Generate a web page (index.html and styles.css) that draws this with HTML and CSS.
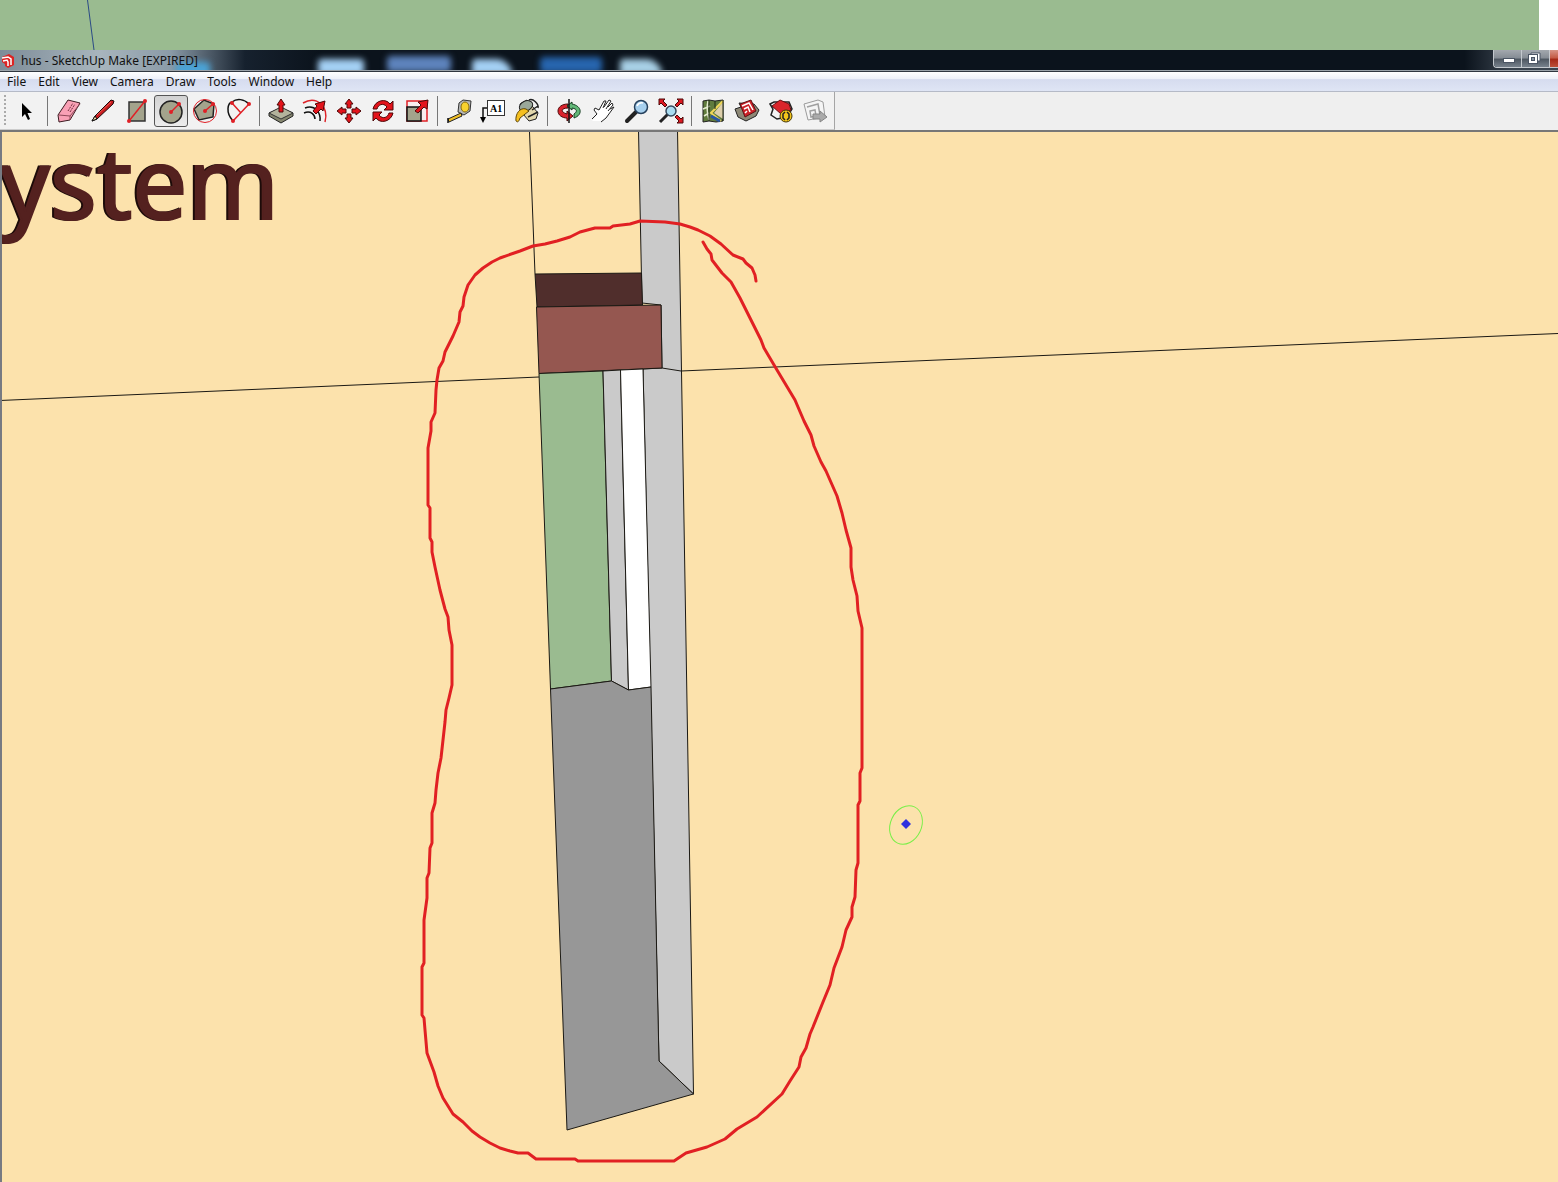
FILE: index.html
```html
<!DOCTYPE html>
<html lang="en">
<head>
<meta charset="utf-8">
<title>hus - SketchUp Make [EXPIRED]</title>
<link rel="stylesheet" href="styles.css">
</head>
<body>
<div class="backdrop">
  <svg class="backdrop-line" viewBox="0 0 100 50" aria-hidden="true"><path d="M87.500 0L94 50" stroke="#2b4a86" fill="none"/></svg>
</div>
<div class="window">
  <header class="titlebar">
    <svg class="app-icon" viewBox="0 0 16 16" aria-hidden="true"><path d="M2 4L9 1L14 4V12L8 15L5 13V11L2 9Z" fill="#dc2424"/><path d="M2 5L8 4L11 6V12M3 8L7 7L8 9V13" stroke="#fff" stroke-width="1.500" fill="none"/></svg>
    <h1 class="title">hus - SketchUp Make [EXPIRED]</h1>
    <div class="glow" aria-hidden="true"><i class="g0"></i><i class="g1"></i><i class="g2"></i><i class="g3"></i><i class="g4"></i><i class="g5"></i></div>
    <div class="controls">
      <button class="control" aria-label="Minimize"><svg viewBox="0 0 28 18"><rect x="9.500" y="8.500" width="11" height="4" fill="#fff" stroke="#4b5564"/></svg></button>
      <button class="control" aria-label="Restore"><svg viewBox="0 0 28 18"><path d="M9 3H18V11H9Z" fill="#fff" stroke="#4b5564"/><rect x="6.500" y="4.500" width="9" height="9" fill="#fff" stroke="#4b5564"/><rect x="9.500" y="7.500" width="3" height="3" fill="#8b95a3" stroke="#4b5564"/></svg></button>
      <button class="control close" aria-label="Close"></button>
    </div>
  </header>
  <nav class="menubar" aria-label="Main menu">
    <button class="menu">File</button><button class="menu">Edit</button><button class="menu">View</button><button class="menu">Camera</button><button class="menu">Draw</button><button class="menu">Tools</button><button class="menu">Window</button><button class="menu">Help</button>
  </nav>
  <div class="toolrow">
  <div class="toolbar" role="toolbar" aria-label="Getting started">
    <span class="grip"></span>
    <button class="tool" aria-label="Select"><svg viewBox="0 0 24 24"><path d="M7 4V18L10 15L13 21L15 20L12.500 14H17Z"/></svg></button>
    <span class="sep"></span>
    <button class="tool" aria-label="Eraser"><svg viewBox="0 0 24 24"><path d="M1 16L11 1L23 4L13 21L2 23Z" fill="#f9a0b5" stroke="#3c1b22"/><path d="M2 16L13 17L23 5M13 17V21" fill="none" stroke="#8e4859"/><path d="M11 12L16 4M13 13L18 5" stroke="#72303f" stroke-dasharray="2 1"/></svg></button>
    <button class="tool" aria-label="Line"><svg viewBox="0 0 24 24"><path d="M1 22L4 17L20 1L23 2L22 5L6 20Z" fill="#c81c20" stroke="#1c0b0b"/><path d="M1 22L4 17L6 20Z" fill="#ecd3a2" stroke="#111"/><path d="M6 16L20 3" stroke="#f15a50"/></svg></button>
    <button class="tool" aria-label="Rectangle"><svg viewBox="0 0 24 24"><path d="M4 3H20V22H4Z" fill="#a3a38c" stroke="#333" stroke-width="1.500"/><path d="M4 22L20 2" stroke="#e02026" stroke-width="1.500"/><circle cx="4" cy="22" r="2" fill="#e02026"/><circle cx="20" cy="2" r="2" fill="#e02026"/></svg></button>
    <button class="tool active" aria-label="Circle" aria-pressed="true"><svg viewBox="0 0 24 24"><circle cx="12" cy="13" r="11" fill="#a3a38c" stroke="#222" stroke-width="1.500"/><path d="M12 13L20 5" stroke="#e02026" stroke-width="1.500"/><circle cx="12" cy="13" r="2" fill="#e02026"/><circle cx="20" cy="5" r="2" fill="#e02026"/></svg></button>
    <button class="tool" aria-label="Polygon"><svg viewBox="0 0 24 24"><path d="M1 10L11 1L21 5L20 18L6 21Z" fill="#a3a38c" stroke="#222" stroke-width="1.500"/><circle cx="12" cy="12" r="11.500" fill="none" stroke="#e02026"/><path d="M12 12L20 5" stroke="#e02026" stroke-width="1.500"/><circle cx="12" cy="12" r="2" fill="#e02026"/><circle cx="20" cy="5" r="2" fill="#e02026"/></svg></button>
    <button class="tool" aria-label="Arc"><svg viewBox="0 0 24 24"><path d="M6 22C-2 13 1 4 5 3C10-1 17 0 22 5" fill="none" stroke="#111" stroke-width="1.500"/><path d="M6 22L22 5M5 4L14 14" stroke="#e02026" stroke-width="1.500"/><circle cx="6" cy="22" r="2" fill="#e02026"/><circle cx="22" cy="5" r="2" fill="#e02026"/><circle cx="5" cy="4" r="2" fill="#e02026"/></svg></button>
    <span class="sep"></span>
    <button class="tool" aria-label="Push/Pull"><svg viewBox="0 0 24 24"><path d="M0 14L12 9L24 14V17L12 24L0 17Z" fill="#85866f" stroke="#222"/><path d="M0 14L12 8L24 14L12 20Z" fill="#b3b39c" stroke="#333"/><path d="M12 0L16 6H14V13H10V6H8Z" fill="#e3131b" stroke="#4d0808"/></svg></button>
    <button class="tool" aria-label="Offset"><svg viewBox="0 0 24 24"><path d="M0 4C14-4 26 8 22 23" fill="none" stroke="#dd2228" stroke-width="1.500"/><path d="M2 9C12 5 18 14 17 22M1 14C8 11 12 16 12 20" fill="none" stroke="#111" stroke-width="1.500"/><path d="M10 12L14 7L12 5L22 2L20 12L18 10L13 15Z" fill="#e3131b" stroke="#4d0808"/></svg></button>
    <button class="tool" aria-label="Move"><svg viewBox="0 0 24 24"><g fill="#e3131b" stroke="#4d0808"><path id="arm" d="M12 0L16 5H14V9H10V5H8Z"/><use href="#arm" transform="rotate(90 12 12)"/><use href="#arm" transform="rotate(180 12 12)"/><use href="#arm" transform="rotate(270 12 12)"/></g></svg></button>
    <button class="tool" aria-label="Rotate"><svg viewBox="0 0 24 24"><g fill="#e3131b" stroke="#4d0808"><path id="turn" d="M2 10C4 1 15-1 19 5L22 2V11H13L16 8C12 3 7 6 6 10Z"/><use href="#turn" transform="rotate(180 12 12)"/></g></svg></button>
    <button class="tool" aria-label="Scale"><svg viewBox="0 0 24 24"><rect x="2" y="2" width="20" height="20" fill="#f8eeee" stroke="#e02026" stroke-width="1.500"/><path d="M2 8H16V22H2Z" fill="#a3a38c" stroke="#111" stroke-width="1.500"/><path d="M10 12L16 6L13 3L23 1L22 10L19 8L13 14Z" fill="#e3131b" stroke="#4d0808"/></svg></button>
    <span class="sep"></span>
    <button class="tool" aria-label="Tape Measure"><svg viewBox="0 0 24 24"><path d="M12 4L16 1L24 2L23 12L17 16L11 13Z" fill="#b7b9b8" stroke="#333"/><ellipse cx="18" cy="8" rx="4" ry="5" fill="#f8d22e" stroke="#866a0d"/><path d="M14 14L1 20L2 23L15 17Z" fill="#f0bf26" stroke="#222"/><path d="M1 19V24" stroke="#111" stroke-width="1.500"/></svg></button>
    <button class="tool" aria-label="Text"><svg viewBox="0 0 24 24"><rect x="6.500" y="1.500" width="17" height="15" fill="#fff" stroke="#333"/><path d="M6 9H2V20" fill="none" stroke="#111" stroke-width="1.500"/><path d="M-1 18H5L2 24Z"/><text x="9" y="13" class="glyph">A1</text></svg></button>
    <button class="tool" aria-label="Paint Bucket"><svg viewBox="0 0 24 24"><path d="M5 5L12 1L23 14L21 20L14 22L8 15Z" fill="#e3d8ac" stroke="#222"/><ellipse cx="11" cy="7" rx="7" ry="5" transform="rotate(-25 11 7)" fill="#9aa89a" stroke="#222"/><path d="M11 10C5 8 0 15 1 22C3 24 4 22 5 19L14 12Z" fill="#f5c020" stroke="#5e4608"/><path d="M14 1C18-1 24 5 23 9M17 11L23 7M13 18L23 13" fill="none" stroke="#222" stroke-width="1.500"/></svg></button>
    <span class="sep"></span>
    <button class="tool" aria-label="Orbit"><svg viewBox="0 0 24 24"><path d="M11 5C5 5 1 8 1 12C1 16 5 19 10 19V22L16 17L10 12V15C3 13 4 9 11 9Z" fill="#d9232d" stroke="#4d0808"/><path d="M15 3L10 7L15 11V9C21 10 20 13 17 15V19C26 16 25 7 15 5Z" fill="#62b878" stroke="#123d20"/><path d="M12 0V24" stroke="#111" stroke-width="1.500"/></svg></button>
    <button class="tool" aria-label="Pan"><svg viewBox="0 0 24 24"><path d="M1 22L6 16L3 11L4 9L8 11L13 2L15 2L13 8L18 1L20 2L16 9L21 4L22 6L18 11L22 8V10L15 19L9 22Z" fill="#fff"/><path d="M1 20L6 15L3 11L4 9L8 11L13 2L15 2L12 9M13 8L18 1L20 2L15 10M17 8L21 4L22 6L17 12M19 10L23 8L15 19L10 23" fill="none" stroke="#222"/></svg></button>
    <button class="tool" aria-label="Zoom"><svg viewBox="0 0 24 24"><path d="M2 22L11 13" stroke="#222" stroke-width="4" stroke-linecap="round"/><circle cx="16" cy="8" r="6.500" fill="#a7d0ee" stroke="#26415d" stroke-width="1.500"/><path d="M12 7Q14 3 18 4" fill="none" stroke="#fff" stroke-width="1.500"/></svg></button>
    <button class="tool" aria-label="Zoom Extents"><svg viewBox="0 0 24 24"><path d="M1 23L9 15" stroke="#222" stroke-width="3"/><circle cx="12" cy="12" r="5" fill="#a9dcf1" stroke="#33485c" stroke-width="1.500"/><g fill="#dc1a22" stroke="#4d0808"><path id="corner" d="M0 0H6L4 2L8 6L6 8L2 4L0 6Z"/><use href="#corner" transform="rotate(90 12 12)"/><use href="#corner" transform="rotate(180 12 12)"/></g></svg></button>
    <span class="sep"></span>
    <button class="tool" aria-label="Add Location"><svg viewBox="0 0 24 24"><path d="M2 2L8 1L14 2L22 1V22L15 23L8 22L2 23Z" fill="#607b3d" stroke="#222"/><path d="M13 14L22 3V20Z" fill="#ddcfac"/><path d="M22 2L10 14L20 22" fill="none" stroke="#f1d75a" stroke-width="2"/><path d="M10 17L19 22" stroke="#2855a2" stroke-width="3"/><path d="M7 2Q5 10 8 21M2 10L9 7M3 17L8 14" fill="none" stroke="#e4ebcf" stroke-width="1.500"/><path d="M8 1V22M14 2V10M22 1V22" stroke="#1c2914"/></svg></button>
    <button class="tool" aria-label="Get Models"><svg viewBox="0 0 24 24"><path d="M0 10L6 8L4 4L19 5L24 11L21 17L11 22L3 18Z" fill="#8d8876" stroke="#222"/><path d="M5 5L16 1L21 12L10 18Z" fill="#cc2026" stroke="#5d1115"/><path d="M7 7L14 4L18 11M9 10L13 8L15 13M10 14L12 12" fill="none" stroke="#fff" stroke-width="1.500"/></svg></button>
    <button class="tool" aria-label="Extension Warehouse"><svg viewBox="0 0 24 24"><path d="M1 5L5 3L20 3L23 10L18 18L8 20L2 16L4 10Z" fill="#f4f4f4" stroke="#222" stroke-width="1.500"/><path d="M3 7L11 1L20 5L22 11L12 15Z" fill="#d9252b" stroke="#6a1013"/><circle cx="17" cy="17" r="6" fill="#f3c51b" stroke="#443708"/><path d="M16 13L14 15V19L16 21M18 13L20 15V19L18 21" fill="none" stroke="#222" stroke-width="1.500"/></svg></button>
    <button class="tool" aria-label="Send to LayOut" disabled><svg viewBox="0 0 24 24"><path d="M1 5L15 1L20 3L22 18L5 21Z" fill="#f5f5f5" stroke="#9b9b9b"/><path d="M4 8L15 5L17 16M7 12L12 11L13 17L8 18Z" fill="none" stroke="#a0a0a0" stroke-width="1.500"/><path d="M10 15H17V12L24 18L17 23V20H10Z" fill="#aaa" stroke="#858585"/></svg></button>
  </div>
  </div>
  <main class="viewport">
    <svg class="scene" viewBox="2 132 1556 1050" role="img" aria-label="Model view">
      <text x="0" y="219" class="lettering">ystem</text>
      <g stroke="#1b1914" fill="none">
        <path d="M0 400.500L539 377M681 371L1558 333.500M529.500 132L535 274"/>
        <path d="M638.500 130L642 303L661 305L662 368L643 369L659 1061L693.500 1094L677.500 130Z" fill="#cacaca"/>
        <path d="M662 368L681 371"/>
        <path d="M535 274L641.500 273L642.500 305L537 307Z" fill="#502e2c"/>
        <path d="M536.500 307L661 305L662 368L539 373.500Z" fill="#955750"/>
        <path d="M539 373.500L603 371L611.500 681L550.500 689Z" fill="#9abb90"/>
        <path d="M603 371L620.500 370L628.500 690L611.500 681Z" fill="#cacaca"/>
        <path d="M620.500 370L643 369L651 687L628.500 690Z" fill="#fff"/>
        <path d="M550.500 689L611.500 681L628.500 690L651 687L659 1061L693.500 1094L567 1130Z" fill="#979797"/>
      </g>
      <path class="marker" d="M756 281L755 275L752 268L746 263L743 259L733 255L721 244L710 236L698 230L690 227L680 224L665 222L640 221L630 224L613 226L610 228L595 228L580 232L570 237L557 241L545 244L533 246L520 251L500 258L492 262L483 268L475 275L468 285L464 297L463 306L460 312L459 322L453 336L445 352L443 361L439 368L437 380L436 390L435 413L431 422L431 431L428 448L428 505L430 508L430 538L432 542L432 552L435 567L440 590L445 609L448 617L449 630L452 645V685L449 698L446 710L445 722L443 740L441 758L438 773L436 790L435 803L432 813V843L430 848L429 873L427 878L427 898L424 920V963L422 967V1015L424 1018L425 1030L427 1053L434 1072L438 1086L443 1098L453 1114L463 1122L472 1131L480 1137L490 1143L500 1148L510 1151L518 1153L528 1153L536 1159L575 1159L578 1161H674L686 1153L707 1147L725 1139L737 1129L757 1117L782 1094L790 1081L799 1067L801 1057L806 1048L810 1034L813 1027L823 1002L830 985L834 968L842 947L846 930L852 917L852 907L855 897L856 870L858 863V805L860 801L860 773L862 768V628L858 611L857 596L853 580L851 567L851 548L846 530L842 513L837 496L826 471L821 462L814 446L811 435L804 421L795 400L777 370L764 348L761 340L752 322L740 298L731 282L722 273L712 260L711 254L707 249L703 242"/>
      <ellipse cx="906" cy="825" rx="15.500" ry="20" transform="rotate(25 906 825)" fill="none" stroke="#79ef48"/>
      <path d="M906 819L911 824L906 829L901 824Z" fill="#2f31df"/>
    </svg>
  </main>
</div>
</body>
</html>
```
FILE: styles.css
```css
* { box-sizing: border-box; }
body { margin: 0; background: #fff; color: #111; font-family: "Noto Sans", sans-serif; font-size: 12px; }
button { font: inherit; color: inherit; padding: 0; border: 0; background: none; }
svg { display: block; }
.backdrop { height: 50px; margin-right: 19px; background: #9abb90; }
.backdrop-line { width: 100px; height: 50px; }
.window { overflow: hidden; }
.titlebar { position: relative; display: flex; align-items: center; height: 22px; background: linear-gradient(90deg, #7d8c98 0, #a8b5bd 100px, #8b9ba8 170px, #16212e 245px, #0b131c 320px, #0b131c 94%, #3a444f 97%); border-bottom: 1px solid #303740; box-shadow: inset 0 -1px #9ba3aa; overflow: hidden; }
.app-icon { position: relative; z-index: 1; width: 16px; height: 16px; }
.title { position: relative; z-index: 1; margin: 0 0 0 5px; font-size: 12px; line-height: 20px; font-weight: 400; }
.glow { position: absolute; inset: 0 0 1px; overflow: hidden; }
.glow i { position: absolute; top: 9px; height: 16px; border-radius: 4px; filter: blur(3px); background: #a4d0f4; }
.glow .g0 { left: 176px; width: 34px; top: 12px; background: #4aa3d6; }
.glow .g1 { left: 318px; width: 46px; }
.glow .g2 { left: 387px; width: 64px; top: 6px; background: #5d83bc; }
.glow .g3 { left: 472px; width: 40px; border-radius: 4px 16px 0 0; }
.glow .g4 { left: 540px; width: 62px; top: 7px; background: #2765ae; }
.glow .g5 { left: 620px; width: 42px; background: #a8d0e6; border-radius: 4px 18px 0 0; }
.controls { position: relative; display: flex; align-self: flex-start; margin-left: auto; height: 18px; border: 1px solid #c4c9ce; border-width: 0 0 1px 1px; border-radius: 0 0 0 4px; overflow: hidden; }
.control { width: 28px; height: 18px; background: linear-gradient(#a3a8ae 0, #858c94 45%, #4d5660 50%, #7c8792); border-right: 1px solid #c4c9ce; }
.control svg { width: 28px; height: 18px; }
.close { width: 8px; border-right: 0; background: linear-gradient(#d79386 0, #c45843 45%, #a42716 50%, #c0543c); }
.menubar { display: flex; gap: 12px; height: 20px; padding-left: 7px; background: linear-gradient(#fff 0, #eef1f9 35%, #d6dcef 40%, #dfe5f5); border-bottom: 1px solid #b5bac7; }
.menu { line-height: 19px; }
.toolrow { display: flex; height: 40px; background: #efefef; border-bottom: 2px solid #777; }
.toolbar { display: flex; align-items: center; padding: 0 2px 0 4px; background: #f2f2f2; border-right: 1px solid #a5a5a5; border-bottom: 1px solid #ccc; }
.grip { width: 2px; height: 32px; margin-right: 4px; background: repeating-linear-gradient(#aaa 0 2px, transparent 2px 4px); }
.tool { display: grid; place-items: center; width: 34px; height: 32px; }
.tool svg { width: 24px; height: 24px; overflow: visible; }
.active { border: 1px solid #555; border-radius: 3px; background: linear-gradient(#d2d2d2, #ededed); }
.sep { width: 1px; height: 30px; margin: 0 4px 0 3px; background: #777; }
.glyph { font: 700 10px "Liberation Serif", serif; }
.viewport { border-left: 2px solid #777a82; background: #fce2ac; }
.scene { width: 100%; height: auto; }
.lettering { font: 98px "Noto Sans", sans-serif; fill: #54211f; stroke: #54211f; stroke-width: 2px; filter: drop-shadow(-2px 0 0 #1d0b09); }
.marker { fill: none; stroke: #e12023; stroke-width: 3px; stroke-linejoin: round; stroke-linecap: round; }
```
